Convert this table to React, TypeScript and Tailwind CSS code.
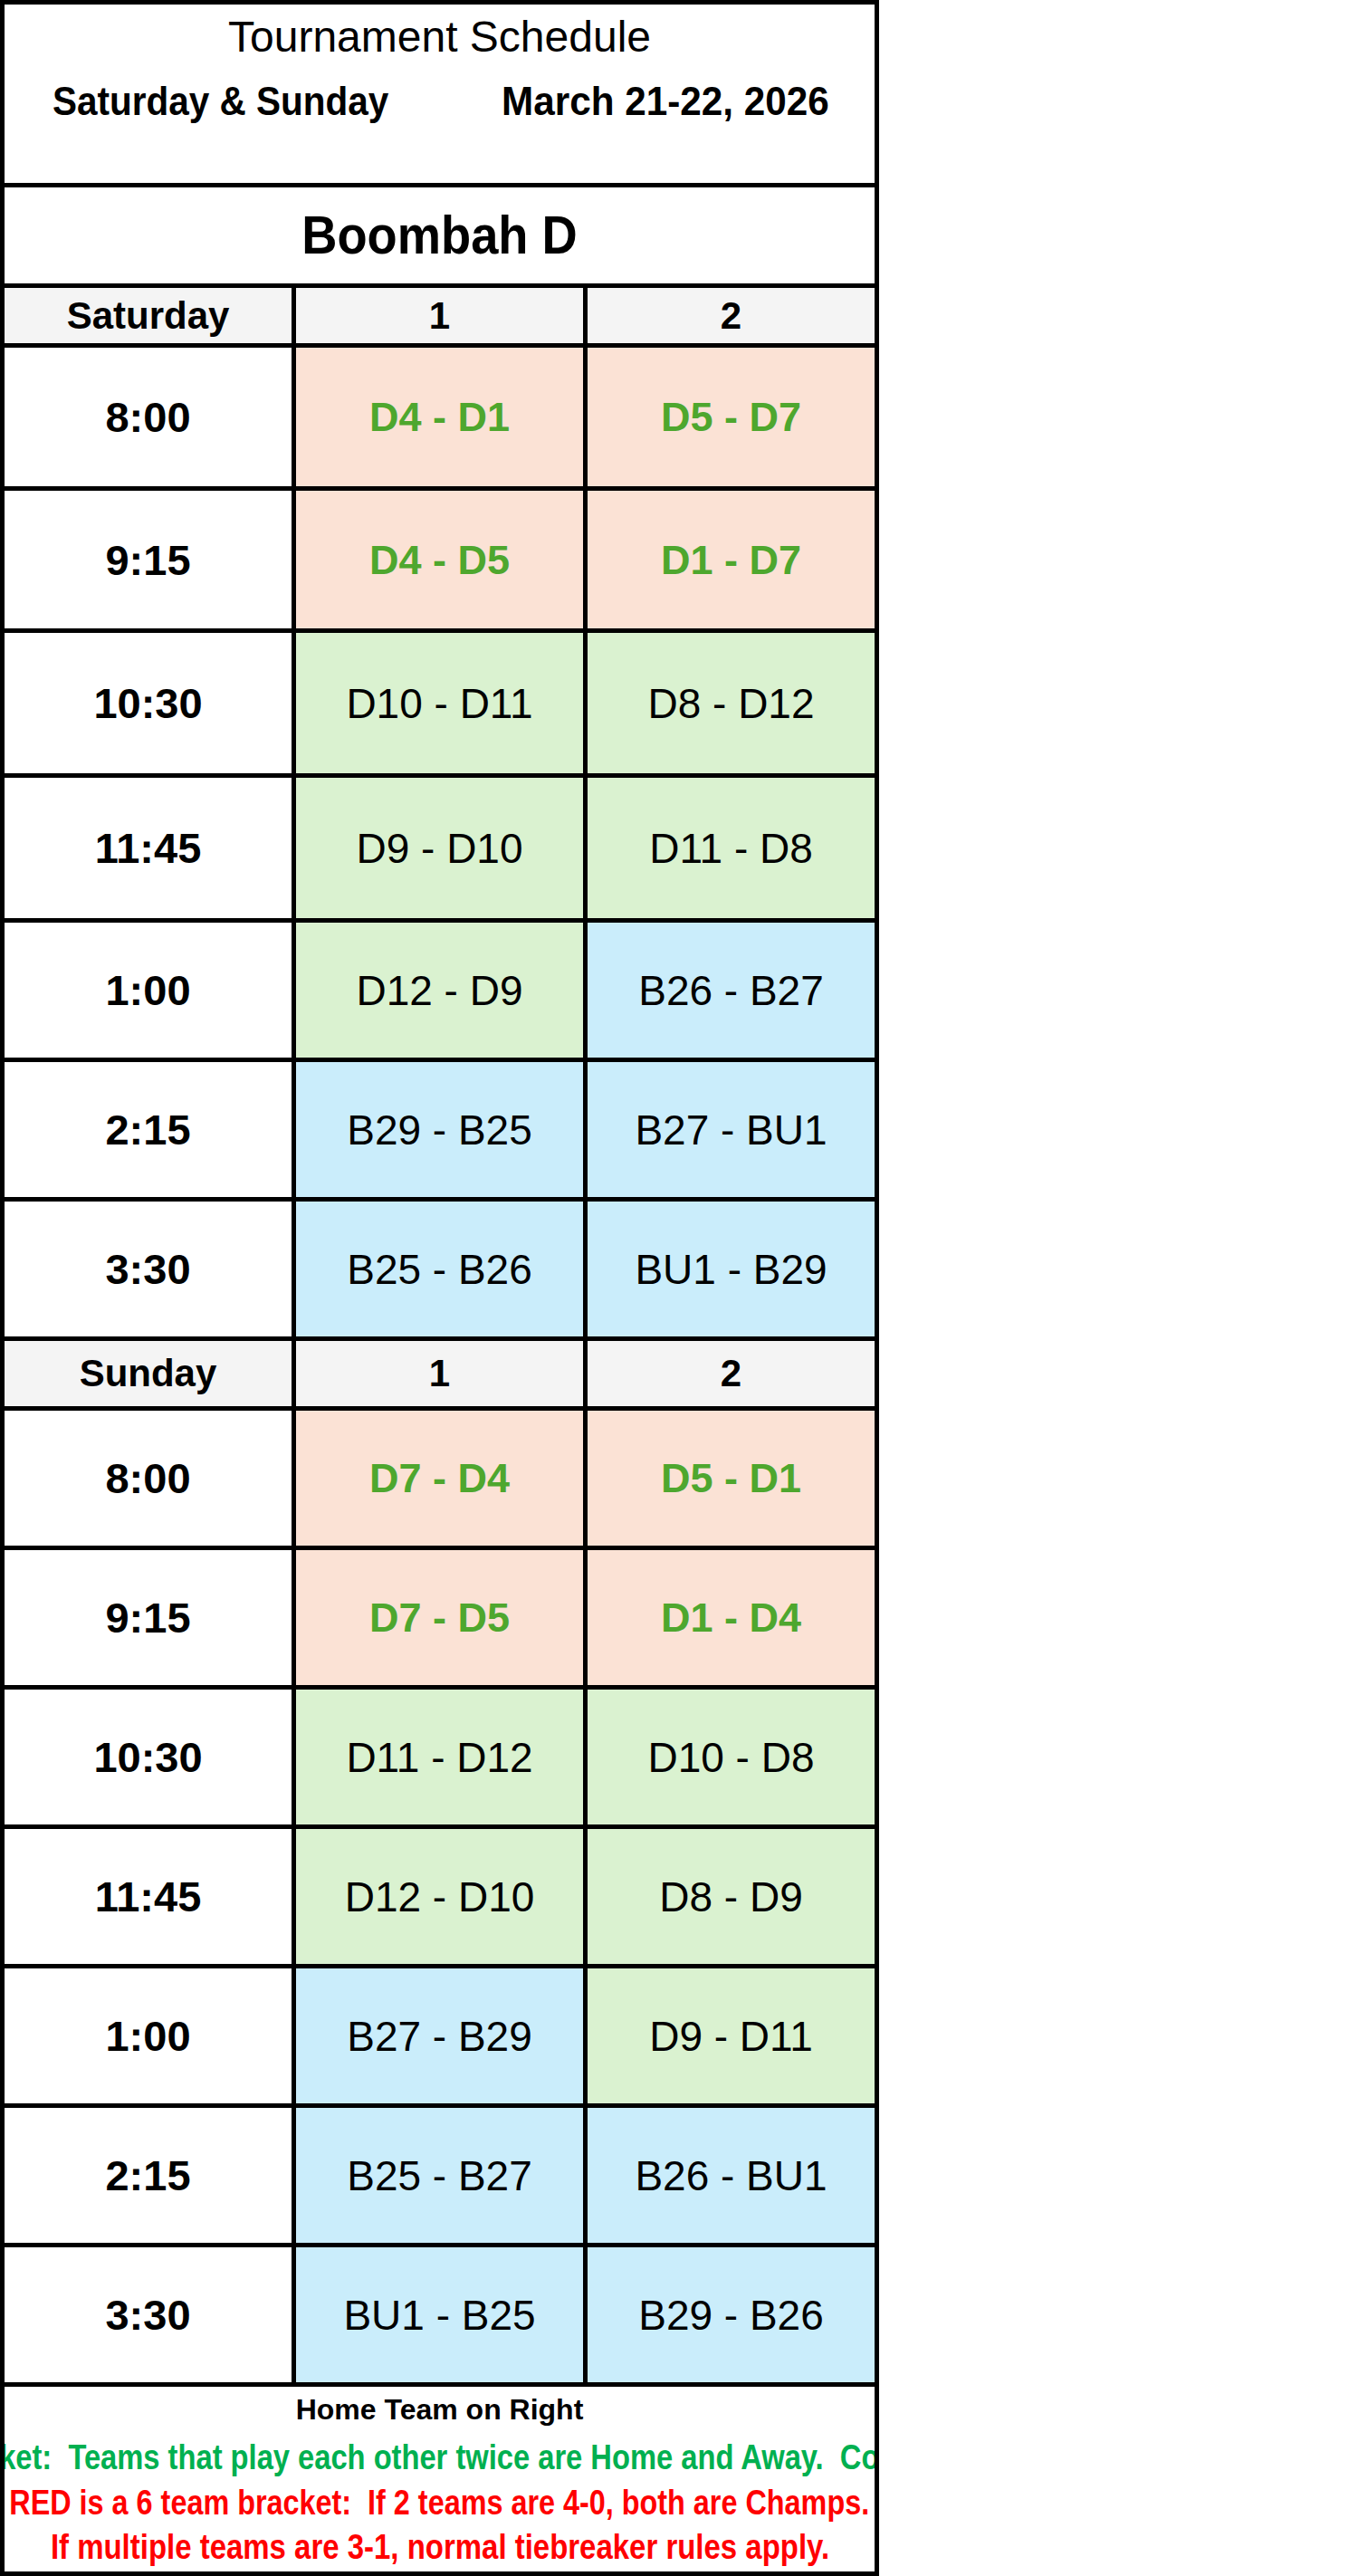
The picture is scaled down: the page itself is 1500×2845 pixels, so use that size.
import React from "react";

type Tone = "p" | "g" | "b";

const sat: [string, string, string, Tone, Tone, string][] = [
  ["8:00", "D4 - D1", "D5 - D7", "p", "p", "h-[153px]"],
  ["9:15", "D4 - D5", "D1 - D7", "p", "p", "h-[152px]"],
  ["10:30", "D10 - D11", "D8 - D12", "g", "g", "h-[155px]"],
  ["11:45", "D9 - D10", "D11 - D8", "g", "g", "h-[155px]"],
  ["1:00", "D12 - D9", "B26 - B27", "g", "b", "h-[149px]"],
  ["2:15", "B29 - B25", "B27 - BU1", "b", "b", "h-[149px]"],
  ["3:30", "B25 - B26", "BU1 - B29", "b", "b", "h-[149px]"],
];

const sun: [string, string, string, Tone, Tone, string][] = [
  ["8:00", "D7 - D4", "D5 - D1", "p", "p", "h-[149px]"],
  ["9:15", "D7 - D5", "D1 - D4", "p", "p", "h-[149px]"],
  ["10:30", "D11 - D12", "D10 - D8", "g", "g", "h-[149px]"],
  ["11:45", "D12 - D10", "D8 - D9", "g", "g", "h-[149px]"],
  ["1:00", "B27 - B29", "D9 - D11", "b", "g", "h-[149px]"],
  ["2:15", "B25 - B27", "B26 - BU1", "b", "b", "h-[149px]"],
  ["3:30", "BU1 - B25", "B29 - B26", "b", "b", "h-[149px]"],
];

const ARIAL = "font-['Liberation_Sans',Arial,sans-serif]";

function GameCell({ text, tone }: { text: string; tone: Tone }) {
  const bg =
    tone === "p" ? "bg-[#fbe2d5]" : tone === "g" ? "bg-[#daf2d0]" : "bg-[#caedfb]";
  const txt =
    tone === "p"
      ? "text-[#4ea72e] font-bold text-[45px]"
      : "text-black font-normal text-[46px]";
  return (
    <div className={`${bg} flex items-center justify-center ${ARIAL} ${txt} leading-none whitespace-nowrap`}>
      {text}
    </div>
  );
}

function DayHeader({ day, h }: { day: string; h: string }) {
  return (
    <div className={`grid grid-cols-[317px_317px_317px] gap-[5px] ${h}`}>
      {[day, "1", "2"].map((t, i) => (
        <div
          key={i}
          className={`bg-[#f4f4f4] flex items-center justify-center ${ARIAL} font-bold text-[42px] leading-none text-black`}
        >
          {t}
        </div>
      ))}
    </div>
  );
}

function Rows({ rows }: { rows: [string, string, string, Tone, Tone, string][] }) {
  return (
    <>
      {rows.map((r, i) => (
        <div key={i} className={`grid grid-cols-[317px_317px_317px] gap-[5px] ${r[5]}`}>
          <div className={`bg-white flex items-center justify-center ${ARIAL} font-bold text-[47px] leading-none text-black`}>
            {r[0]}
          </div>
          <GameCell text={r[1]} tone={r[3]} />
          <GameCell text={r[2]} tone={r[4]} />
        </div>
      ))}
    </>
  );
}

export default function App() {
  return (
    <div className="w-[1500px] h-[2845px] bg-white">
      <div className="w-[971px] bg-black p-[5px] flex flex-col gap-[5px]">
        {/* Title block */}
        <div className="h-[197px] bg-white flex flex-col">
          <div className={`h-[72px] flex items-center justify-center ${ARIAL} text-[48px] font-normal text-black leading-none`}>
            Tournament Schedule
          </div>
          <div className={`h-[70px] flex items-center justify-between pl-[53px] pr-[50px] ${ARIAL} text-[44px] font-bold text-black leading-none whitespace-nowrap`}>
            <span className="inline-block origin-left scale-x-[0.92]">Saturday &amp; Sunday</span>
            <span className="inline-block origin-right scale-x-[0.96]">March 21-22, 2026</span>
          </div>
        </div>
        {/* Division */}
        <div className={`h-[106px] bg-white flex items-center justify-center ${ARIAL} text-[59px] font-bold text-black leading-none`}>
          <span className="inline-block scale-x-[0.92]">Boombah D</span>
        </div>
        <DayHeader day="Saturday" h="h-[61px]" />
        <Rows rows={sat} />
        <DayHeader day="Sunday" h="h-[72px]" />
        <Rows rows={sun} />
        {/* Footer */}
        <div className="h-[204px] bg-white flex flex-col items-center overflow-hidden">
          <div className={`h-[50px] w-full flex items-center justify-center ${ARIAL} font-bold text-[32px] text-black leading-none whitespace-nowrap`}>
            Home Team on Right
          </div>
          <div className={`mt-[4px] h-[48px] w-full flex items-center justify-center overflow-hidden ${ARIAL} font-bold text-[38px] text-[#00b050] leading-none whitespace-pre`}>
            <span className="inline-block shrink-0 scale-x-[0.86]">ket:  Teams that play each other twice are Home and Away.  Co</span>
          </div>
          <div className={`h-[50px] w-full flex items-center justify-center overflow-hidden ${ARIAL} font-bold text-[39px] text-[#ff0000] leading-none whitespace-pre`}>
            <span className="inline-block shrink-0 scale-x-[0.83]">RED is a 6 team bracket:  If 2 teams are 4-0, both are Champs.</span>
          </div>
          <div className={`h-[48px] w-full flex items-center justify-center overflow-hidden ${ARIAL} font-bold text-[39px] text-[#ff0000] leading-none whitespace-pre`}>
            <span className="inline-block shrink-0 scale-x-[0.845]">If multiple teams are 3-1, normal tiebreaker rules apply.</span>
          </div>
        </div>
      </div>
    </div>
  );
}
